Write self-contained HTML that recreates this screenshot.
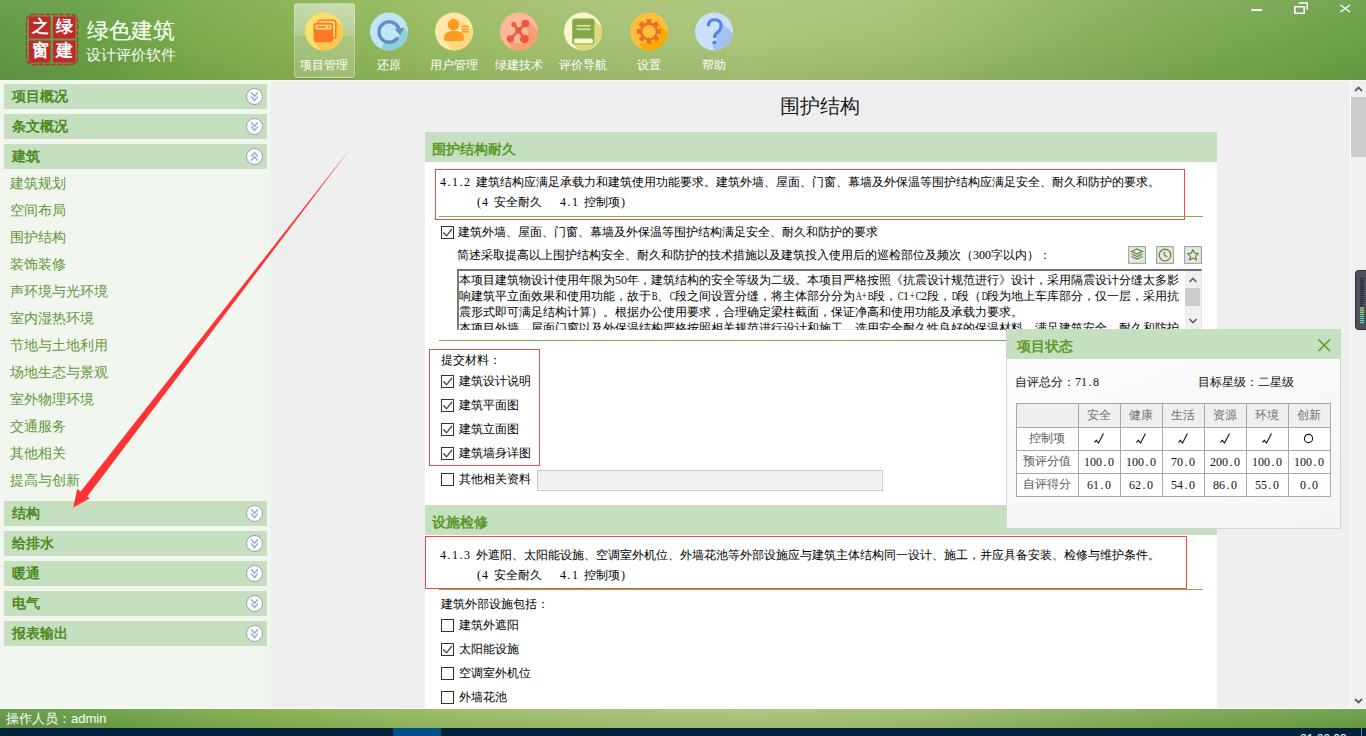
<!DOCTYPE html><html><head><meta charset="utf-8"><style>
*{margin:0;padding:0}
html,body{width:1366px;height:736px;overflow:hidden;background:#efefef;position:relative}
body{font-family:"Liberation Sans",sans-serif}
.a{position:absolute}
#hdr{position:absolute;left:0;top:0;width:1366px;height:80px;
 background:
 linear-gradient(180deg,rgba(255,255,255,0.06) 0%,rgba(0,0,0,0) 50%,rgba(40,80,20,0.10) 100%),
 linear-gradient(100deg,#629848 0%,#68a046 7%,#7dab4c 15%,#8ab252 22%,#9bbc65 33%,#a6c274 44%,#abc57b 55%,#a3c074 66%,#97b869 73%,#8ab05e 80%,#7ca952 88%,#72a34b 95%,#6a9e46 100%);}
.seal{color:#fff;font:bold 17px/22px "Liberation Sans",sans-serif;text-align:center}
.ttl{color:#eef9e6;font:22px/28px "Liberation Sans",sans-serif;letter-spacing:0px;text-shadow:0 0 0.6px #eef9e6}
.sub{color:#f4f9f0;font:15px/20px "Liberation Serif",serif;letter-spacing:0px}
.selbtn{border-radius:3px;border:1px solid rgba(255,255,255,0.30);box-sizing:border-box;
 background:linear-gradient(180deg,rgba(255,255,255,0.50) 0%,rgba(255,255,255,0.36) 43%,rgba(255,255,255,0.24) 44%,rgba(255,255,255,0.20) 100%);
 box-shadow:0 1px 1px rgba(0,0,0,0.15)}
.tbl{color:#fff;font:12px/16px "Liberation Sans",sans-serif;text-align:center}
.acc{background:#c6dfc0}
.acc span{position:absolute;left:8px;top:4px;font:bold 14px/17px "Liberation Sans",sans-serif;color:#4c8a1e}
.itm{font:14px/18px "Liberation Sans",sans-serif;color:#62973b;white-space:nowrap}
.ptitle{font:20px/26px "Liberation Serif",serif;color:#1a1a1a;text-align:center}
.sec{padding-top:1.5px;box-sizing:border-box;background:#c6dfc0;font:bold 14px/30px "Liberation Sans",sans-serif;color:#5b9a2b;text-indent:7px}
.pop{text-indent:11px}
.rbox{border:1.5px solid #f44;box-sizing:border-box}
.gl{background:#7fae57}
.ss{font:12px/16px "Liberation Serif",serif;color:#000;white-space:nowrap}
.h{font-family:"Liberation Mono",monospace;letter-spacing:-1.2px}
.c{display:inline-block;width:6px;text-align:center;font-style:normal;font-family:"Liberation Serif",serif}
.l{transform:scaleX(0.72)}
.ta{border-top:2px solid #6f6f6f;border-left:2px solid #7a7a7a;border-bottom:1px solid #e4e4e4;border-right:1px solid #e4e4e4;box-sizing:border-box;background:#fff}
.tal{font:12px/16px "Liberation Serif",serif;color:#000;white-space:nowrap;height:16px}
.yh12{font:12px/16px "Liberation Sans",sans-serif;color:#111;white-space:nowrap}
.th{font:12px/18px "Liberation Sans",sans-serif;color:#707070;text-align:center}
.td0{color:#5a5a5a}
.tv{font:12px/18px "Liberation Serif",serif;color:#111;text-align:center}
.stbar{background:linear-gradient(180deg,rgba(255,255,255,0.05),rgba(30,60,10,0.08)),linear-gradient(100deg,#629848 0%,#68a046 7%,#7dab4c 15%,#8ab252 22%,#9bbc65 33%,#a6c274 44%,#abc57b 55%,#a3c074 66%,#97b869 73%,#8ab05e 80%,#7ca952 88%,#72a34b 95%,#6a9e46 100%)}
.stat{color:#fff;font:13px/18px "Liberation Sans",sans-serif;white-space:nowrap}
</style></head><body><div id="hdr"></div>
<svg class="a" style="left:24px;top:12px" width="56" height="56" viewBox="0 0 56 56">
<rect x="2.5" y="2.5" width="51" height="50" rx="6" fill="none" stroke="#b8302a" stroke-width="1.3" stroke-dasharray="5 1.5"/>
<rect x="5" y="4.5" width="21.5" height="22" fill="#c0282a"/>
<rect x="29" y="4.5" width="22.5" height="22" fill="#c0282a"/>
<rect x="5" y="28.5" width="21.5" height="22" fill="#c0282a"/>
<rect x="29" y="28.5" width="22.5" height="22" fill="#c0282a"/>
</svg>
<div class="a seal" style="left:29px;top:16px;width:22px;height:22px;">之</div>
<div class="a seal" style="left:53px;top:16px;width:22px;height:22px;">绿</div>
<div class="a seal" style="left:29px;top:40px;width:22px;height:22px;">窗</div>
<div class="a seal" style="left:53px;top:40px;width:22px;height:22px;">建</div>
<div class="a ttl" style="left:87px;top:16.5px;width:100px;height:28px;">绿色建筑</div>
<div class="a sub" style="left:86px;top:45px;width:100px;height:20px;">设计评价软件</div>
<div class="a selbtn" style="left:294px;top:3px;width:61px;height:75px;"></div>
<div class="a tbl" style="left:284px;top:57px;width:80px;height:16px;">项目管理</div>
<div class="a tbl" style="left:349px;top:57px;width:80px;height:16px;">还原</div>
<div class="a tbl" style="left:414px;top:57px;width:80px;height:16px;">用户管理</div>
<div class="a tbl" style="left:479px;top:57px;width:80px;height:16px;">绿建技术</div>
<div class="a tbl" style="left:543px;top:57px;width:80px;height:16px;">评价导航</div>
<div class="a tbl" style="left:609px;top:57px;width:80px;height:16px;">设置</div>
<div class="a tbl" style="left:674px;top:57px;width:80px;height:16px;">帮助</div>
<svg class="a" style="left:0;top:0" width="760" height="60">
<defs>
<clipPath id="c1"><circle cx="324" cy="31.5" r="19"/></clipPath>
<clipPath id="c2"><circle cx="389" cy="31.5" r="19"/></clipPath>
<clipPath id="c3"><circle cx="519" cy="31.5" r="19"/></clipPath>
<clipPath id="c4"><circle cx="583" cy="31.5" r="19"/></clipPath>
<clipPath id="c5"><circle cx="649" cy="31.5" r="19"/></clipPath>
<clipPath id="c6"><circle cx="714" cy="31.5" r="19"/></clipPath>
<clipPath id="c7"><circle cx="454" cy="31.5" r="19"/></clipPath>
</defs>
<!-- 1 project -->
<circle cx="324" cy="31.5" r="19" fill="#fddf6e"/>
<path clip-path="url(#c1)" d="M336 20 L366 50 L346 76 L313.6 42.2 L333 42.2 Z" fill="#fcc84c"/>
<rect x="318" y="20.2" width="17.8" height="17.8" rx="2.2" fill="#fee27c" stroke="#ff7a26" stroke-width="1.6"/>
<rect x="313.6" y="22.8" width="19.6" height="19.4" rx="2.6" fill="#ff7a26"/>
<rect x="315.4" y="24.7" width="16" height="4.7" rx="0.8" fill="#fde07a"/>
<rect x="317.3" y="26.1" width="8" height="1.8" fill="#ff7a26"/>
<rect x="328.2" y="26.1" width="1.9" height="1.8" fill="#ff7a26"/>
<!-- 2 restore -->
<circle cx="389" cy="31.5" r="19" fill="#bee7f6"/>
<path clip-path="url(#c2)" d="M400 34 L404.1 28.3 L432 56 L408 82 L380 52 L384 42.5 L392 41.5 L397 39 Z" fill="#8dd0de"/>
<path d="M397 38.6 A10.2 10.2 0 1 1 398.4 27.6" fill="none" stroke="#6a8dbf" stroke-width="3.4" stroke-linecap="round"/>
<path d="M395.2 29.2 L404.2 28.2 L400 34.4 Z" fill="#6a8dbf" stroke="#6a8dbf" stroke-width="0.8" stroke-linejoin="round"/>
<!-- 7 user -->
<circle cx="454" cy="31.5" r="19" fill="#fee7a8"/>
<path clip-path="url(#c7)" d="M459 20 L469 26 L495 52 L470 78 L446 41 L464 41 Z" fill="#fdd97e"/>
<circle cx="453.5" cy="24.6" r="5.9" fill="#ff9a20"/>
<path d="M444 38.5 Q444 30.8 454 30.8 Q464 30.8 464 38.5 Q464 41 461.5 41 L446.5 41 Q444 41 444 38.5 Z" fill="#ff9a20"/>
<rect x="461.6" y="25.6" width="7.2" height="1.6" fill="#ff9a20"/>
<rect x="461.6" y="28.4" width="7.2" height="1.6" fill="#ff9a20"/>
<rect x="461.6" y="31" width="7.2" height="1.6" fill="#ff9a20"/>
<!-- 3 tech -->
<circle cx="519" cy="31.5" r="19" fill="#fdb899"/>
<path clip-path="url(#c3)" d="M527 20 L550 43 L528 76 L508 42 L524 43.5 L528 40 Z" fill="#f9a073"/>
<path d="M513.8 24.6 L518.5 30.5 L525.4 23.6 M518.5 30.5 L510.4 38.9 M518.5 30.5 L524.4 38.9" fill="none" stroke="#e85a40" stroke-width="2.4"/>
<circle cx="513.8" cy="24.6" r="2.5" fill="#e85a40"/>
<circle cx="525.4" cy="23.6" r="3.9" fill="#e85a40"/>
<circle cx="510.4" cy="38.9" r="3.6" fill="#e85a40"/>
<circle cx="524.4" cy="38.9" r="4.4" fill="#e85a40"/>
<rect x="515.4" y="27.4" width="6.2" height="6.2" fill="#e85a40"/>
<!-- 4 book -->
<circle cx="583" cy="31.5" r="19" fill="#f8f6cb"/>
<path clip-path="url(#c4)" d="M594 20 L622 48 L598 78 L574 44.6 L594.4 44.6 Z" fill="#dcd97c"/>
<rect x="572.2" y="18.6" width="22.2" height="26" rx="2.5" fill="#85a84a"/>
<rect x="573.8" y="38.6" width="19.3" height="5" rx="2.2" fill="#f8f6cb"/>
<rect x="576.6" y="25" width="14" height="1.6" fill="#d9e6a8"/>
<rect x="576.6" y="28.5" width="14" height="1.6" fill="#d9e6a8"/>
<!-- 5 gear -->
<circle cx="649" cy="31.5" r="19" fill="#ffbf3c"/>
<path clip-path="url(#c5)" d="M658 23 L685 50 L660 76 L639 43 L648 44 L657 40 L660 33 Z" fill="#f8aa00"/>
<g fill="#ef6f22">
<circle cx="649" cy="31.5" r="9.2"/>
<rect x="646.6" y="19.2" width="4.8" height="24.6"/>
<rect x="636.7" y="29.1" width="24.6" height="4.8"/>
<rect x="646.6" y="19.2" width="4.8" height="24.6" transform="rotate(45 649 31.5)"/>
<rect x="646.6" y="19.2" width="4.8" height="24.6" transform="rotate(-45 649 31.5)"/>
</g>
<circle cx="649" cy="31.5" r="6.6" fill="#ffbf3c"/>
<!-- 6 help -->
<circle cx="714" cy="31.5" r="19" fill="#cde0fa"/>
<path clip-path="url(#c6)" d="M721.6 22.7 L745 45 L725 80 L712 43.6 L716.3 43.6 L717 34 L721 29 Z" fill="#a2c2f0"/>
<path d="M708.3 26.2 Q708.3 19.8 714.6 19.8 Q721 19.8 721 26 Q721 29.6 717.8 32 Q714.5 34.5 714.5 38" fill="none" stroke="#5682f0" stroke-width="3.1"/>
<rect x="712.6" y="40.8" width="3.8" height="3.3" rx="0.6" fill="#5682f0"/>
</svg>
<svg class="a" style="left:1240px;top:0" width="126" height="30">
<rect x="11.5" y="9" width="10.5" height="2" fill="#fff"/>
<path d="M54.8 6.8 H64.2 V13.2 H54.8 Z" fill="none" stroke="#fff" stroke-width="1.6"/>
<path d="M58.6 3 H67.2 V9.6" fill="none" stroke="#fff" stroke-width="1.6"/>
<path d="M100.5 5 L110 12 M110 5 L100.5 12" stroke="#fff" stroke-width="1.5"/>
</svg>
<div class="a " style="left:0px;top:80px;width:1366px;height:1px;background:#f7faf5"></div>
<div class="a " style="left:0px;top:81px;width:271px;height:627px;background:#f1f6ef"></div>
<div class="a acc" style="left:4px;top:84px;width:263px;height:25px;"><span>项目概况</span></div>
<svg class="a" style="left:245px;top:87px" width="19" height="19" viewBox="-9.5 -9.5 19 19"><circle r="8" fill="#fff" stroke="#9a9a9a" stroke-width="1"/><path d="M-3.4 -4.3 L0 -0.2 L3.4 -4.3 M-3.4 -0.1 L0 4.0 L3.4 -0.1" fill="none" stroke="#90b0d8" stroke-width="1.45"/></svg>
<div class="a acc" style="left:4px;top:114px;width:263px;height:25px;"><span>条文概况</span></div>
<svg class="a" style="left:245px;top:117px" width="19" height="19" viewBox="-9.5 -9.5 19 19"><circle r="8" fill="#fff" stroke="#9a9a9a" stroke-width="1"/><path d="M-3.4 -4.3 L0 -0.2 L3.4 -4.3 M-3.4 -0.1 L0 4.0 L3.4 -0.1" fill="none" stroke="#90b0d8" stroke-width="1.45"/></svg>
<div class="a acc" style="left:4px;top:144px;width:263px;height:25px;"><span>建筑</span></div>
<svg class="a" style="left:245px;top:147px" width="19" height="19" viewBox="-9.5 -9.5 19 19"><circle r="8" fill="#fff" stroke="#9a9a9a" stroke-width="1"/><path d="M-3.4 0.2 L0 -3.9 L3.4 0.2 M-3.4 4.3 L0 0.2 L3.4 4.3" fill="none" stroke="#90b0d8" stroke-width="1.45"/></svg>
<div class="a itm" style="left:10px;top:174px;width:240px;height:18px;">建筑规划</div>
<div class="a itm" style="left:10px;top:201px;width:240px;height:18px;">空间布局</div>
<div class="a itm" style="left:10px;top:228px;width:240px;height:18px;">围护结构</div>
<div class="a itm" style="left:10px;top:255px;width:240px;height:18px;">装饰装修</div>
<div class="a itm" style="left:10px;top:282px;width:240px;height:18px;">声环境与光环境</div>
<div class="a itm" style="left:10px;top:309px;width:240px;height:18px;">室内湿热环境</div>
<div class="a itm" style="left:10px;top:336px;width:240px;height:18px;">节地与土地利用</div>
<div class="a itm" style="left:10px;top:363px;width:240px;height:18px;">场地生态与景观</div>
<div class="a itm" style="left:10px;top:390px;width:240px;height:18px;">室外物理环境</div>
<div class="a itm" style="left:10px;top:417px;width:240px;height:18px;">交通服务</div>
<div class="a itm" style="left:10px;top:444px;width:240px;height:18px;">其他相关</div>
<div class="a itm" style="left:10px;top:471px;width:240px;height:18px;">提高与创新</div>
<div class="a acc" style="left:4px;top:501px;width:263px;height:25px;"><span>结构</span></div>
<svg class="a" style="left:245px;top:504px" width="19" height="19" viewBox="-9.5 -9.5 19 19"><circle r="8" fill="#fff" stroke="#9a9a9a" stroke-width="1"/><path d="M-3.4 -4.3 L0 -0.2 L3.4 -4.3 M-3.4 -0.1 L0 4.0 L3.4 -0.1" fill="none" stroke="#90b0d8" stroke-width="1.45"/></svg>
<div class="a acc" style="left:4px;top:531px;width:263px;height:25px;"><span>给排水</span></div>
<svg class="a" style="left:245px;top:534px" width="19" height="19" viewBox="-9.5 -9.5 19 19"><circle r="8" fill="#fff" stroke="#9a9a9a" stroke-width="1"/><path d="M-3.4 -4.3 L0 -0.2 L3.4 -4.3 M-3.4 -0.1 L0 4.0 L3.4 -0.1" fill="none" stroke="#90b0d8" stroke-width="1.45"/></svg>
<div class="a acc" style="left:4px;top:561px;width:263px;height:25px;"><span>暖通</span></div>
<svg class="a" style="left:245px;top:564px" width="19" height="19" viewBox="-9.5 -9.5 19 19"><circle r="8" fill="#fff" stroke="#9a9a9a" stroke-width="1"/><path d="M-3.4 -4.3 L0 -0.2 L3.4 -4.3 M-3.4 -0.1 L0 4.0 L3.4 -0.1" fill="none" stroke="#90b0d8" stroke-width="1.45"/></svg>
<div class="a acc" style="left:4px;top:591px;width:263px;height:25px;"><span>电气</span></div>
<svg class="a" style="left:245px;top:594px" width="19" height="19" viewBox="-9.5 -9.5 19 19"><circle r="8" fill="#fff" stroke="#9a9a9a" stroke-width="1"/><path d="M-3.4 -4.3 L0 -0.2 L3.4 -4.3 M-3.4 -0.1 L0 4.0 L3.4 -0.1" fill="none" stroke="#90b0d8" stroke-width="1.45"/></svg>
<div class="a acc" style="left:4px;top:621px;width:263px;height:25px;"><span>报表输出</span></div>
<svg class="a" style="left:245px;top:624px" width="19" height="19" viewBox="-9.5 -9.5 19 19"><circle r="8" fill="#fff" stroke="#9a9a9a" stroke-width="1"/><path d="M-3.4 -4.3 L0 -0.2 L3.4 -4.3 M-3.4 -0.1 L0 4.0 L3.4 -0.1" fill="none" stroke="#90b0d8" stroke-width="1.45"/></svg>
<div class="a " style="left:271px;top:81px;width:1079px;height:627px;background:#efefef"></div>
<div class="a ptitle" style="left:700px;top:93px;width:240px;height:26px;">围护结构</div>
<div class="a " style="left:425px;top:132px;width:792px;height:576px;background:#fff"></div>
<div class="a sec" style="left:425px;top:132px;width:792px;height:30px;">围护结构耐久</div>
<div class="a rbox" style="left:435px;top:169px;width:750px;height:51px;"></div>
<div class="a ss" style="left:440px;top:174px;width:740px;height:16px;"><i class="c">4</i><i class="c">.</i><i class="c">1</i><i class="c">.</i><i class="c">2</i><i class="c">&nbsp;</i>建筑结构应满足承载力和建筑使用功能要求。建筑外墙、屋面、门窗、幕墙及外保温等围护结构应满足安全、耐久和防护的要求。</div>
<div class="a ss" style="left:476px;top:194px;width:400px;height:16px;"><i class="c">(</i><i class="c">4</i><i class="c">&nbsp;</i>安全耐久<i class="c">&nbsp;</i><i class="c">&nbsp;</i><i class="c">&nbsp;</i><i class="c">4</i><i class="c">.</i><i class="c">1</i><i class="c">&nbsp;</i>控制项<i class="c">)</i></div>
<div class="a gl" style="left:439px;top:216px;width:764px;height:1px;"></div>
<svg class="a" style="left:441px;top:226px" width="13" height="13"><rect x="0.5" y="0.5" width="12" height="12" fill="#fff" stroke="#333" stroke-width="1"/><path d="M2.2 6.4 L5.6 9.8 L10.9 3" fill="none" stroke="#4a4a4a" stroke-width="1.35"/></svg>
<div class="a ss" style="left:458px;top:224px;width:700px;height:16px;">建筑外墙、屋面、门窗、幕墙及外保温等围护结构满足安全、耐久和防护的要求</div>
<div class="a ss" style="left:457px;top:247px;width:700px;height:16px;">简述采取提高以上围护结构安全、耐久和防护的技术措施以及建筑投入使用后的巡检部位及频次（<i class="c">3</i><i class="c">0</i><i class="c">0</i>字以内）：</div>
<svg class="a" style="left:1128px;top:246px" width="75" height="18">
<g fill="#e6e6e6" stroke="#a8a8a8" stroke-width="1.2"><rect x="0.6" y="0.6" width="16.8" height="16.8"/><rect x="28.6" y="0.6" width="16.8" height="16.8"/><rect x="56.6" y="0.6" width="16.8" height="16.8"/></g>
<g fill="none" stroke="#5b902b" stroke-width="1.25">
<path d="M3.5 5.5 L9 3 L14.5 5.5 L9 8 Z"/>
<path d="M3.5 8 L9 10.5 L14.5 8"/>
<path d="M3.5 10.5 L9 13 L14.5 10.5"/>
<circle cx="37" cy="9" r="5.8"/>
<path d="M36 5.5 L36.5 9 L39 11"/>
<path d="M65 3.6 L66.7 7.2 L70.5 7.6 L67.6 10.1 L68.5 13.9 L65 12 L61.5 13.9 L62.4 10.1 L59.5 7.6 L63.3 7.2 Z" stroke-linejoin="round"/>
</g></svg>
<div class="a ta" style="left:457px;top:269px;width:745px;height:61px;"></div>
<div class="a " style="left:459px;top:272px;width:726px;height:58px;overflow:hidden"><div class="tal">本项目建筑物设计使用年限为<i class="c">5</i><i class="c">0</i>年，建筑结构的安全等级为二级。本项目严格按照《抗震设计规范进行》设计，采用隔震设计分缝太多影</div><div class="tal">响建筑平立面效果和使用功能，故于<i class="c l">B</i>、<i class="c l">C</i>段之间设置分缝，将主体部分分为<i class="c l">A</i><i class="c l">+</i><i class="c l">B</i>段，<i class="c l">C</i><i class="c">1</i><i class="c l">+</i><i class="c l">C</i><i class="c">2</i>段，<i class="c l">D</i>段（<i class="c l">D</i>段为地上车库部分，仅一层，采用抗</div><div class="tal">震形式即可满足结构计算）。根据办公使用要求，合理确定梁柱截面，保证净高和使用功能及承载力要求。</div><div class="tal">本项目外墙、屋面门窗以及外保温结构严格按照相关规范进行设计和施工，选用安全耐久性良好的保温材料，满足建筑安全，耐久和防护</div></div>
<div class="a " style="left:1185px;top:271px;width:16px;height:59px;background:#f0f0f0"></div>
<div class="a " style="left:1185px;top:288px;width:15px;height:18px;background:#cdcdcd"></div>
<svg class="a" style="left:1185px;top:271px" width="16" height="59"><path d="M4.5 11 L8 7.5 L11.5 11" fill="none" stroke="#606060" stroke-width="1.6"/><path d="M4.5 48 L8 51.5 L11.5 48" fill="none" stroke="#606060" stroke-width="1.6"/></svg>
<div class="a gl" style="left:439px;top:340px;width:764px;height:1px;"></div>
<div class="a rbox" style="left:429px;top:349px;width:111px;height:117px;"></div>
<div class="a ss" style="left:441px;top:352px;width:100px;height:16px;">提交材料：</div>
<svg class="a" style="left:441px;top:375px" width="13" height="13"><rect x="0.5" y="0.5" width="12" height="12" fill="#fff" stroke="#333" stroke-width="1"/><path d="M2.2 6.4 L5.6 9.8 L10.9 3" fill="none" stroke="#4a4a4a" stroke-width="1.35"/></svg>
<div class="a ss" style="left:459px;top:373px;width:100px;height:16px;">建筑设计说明</div>
<svg class="a" style="left:441px;top:399px" width="13" height="13"><rect x="0.5" y="0.5" width="12" height="12" fill="#fff" stroke="#333" stroke-width="1"/><path d="M2.2 6.4 L5.6 9.8 L10.9 3" fill="none" stroke="#4a4a4a" stroke-width="1.35"/></svg>
<div class="a ss" style="left:459px;top:397px;width:100px;height:16px;">建筑平面图</div>
<svg class="a" style="left:441px;top:423px" width="13" height="13"><rect x="0.5" y="0.5" width="12" height="12" fill="#fff" stroke="#333" stroke-width="1"/><path d="M2.2 6.4 L5.6 9.8 L10.9 3" fill="none" stroke="#4a4a4a" stroke-width="1.35"/></svg>
<div class="a ss" style="left:459px;top:421px;width:100px;height:16px;">建筑立面图</div>
<svg class="a" style="left:441px;top:447px" width="13" height="13"><rect x="0.5" y="0.5" width="12" height="12" fill="#fff" stroke="#333" stroke-width="1"/><path d="M2.2 6.4 L5.6 9.8 L10.9 3" fill="none" stroke="#4a4a4a" stroke-width="1.35"/></svg>
<div class="a ss" style="left:459px;top:445px;width:100px;height:16px;">建筑墙身详图</div>
<svg class="a" style="left:441px;top:473px" width="13" height="13"><rect x="0.5" y="0.5" width="12" height="12" fill="#fff" stroke="#333" stroke-width="1"/></svg>
<div class="a ss" style="left:459px;top:471px;width:100px;height:16px;">其他相关资料</div>
<div class="a " style="left:537px;top:470px;width:346px;height:21px;background:#f0f0f0;border:1px solid #c8c8c8;box-shadow:inset -1px -1px 0 #fff;box-sizing:border-box"></div>
<div class="a sec" style="left:425px;top:505px;width:792px;height:30px;">设施检修</div>
<div class="a rbox" style="left:425px;top:536px;width:762px;height:53px;"></div>
<div class="a ss" style="left:440px;top:547px;width:740px;height:16px;"><i class="c">4</i><i class="c">.</i><i class="c">1</i><i class="c">.</i><i class="c">3</i><i class="c">&nbsp;</i>外遮阳、太阳能设施、空调室外机位、外墙花池等外部设施应与建筑主体结构同一设计、施工，并应具备安装、检修与维护条件。</div>
<div class="a ss" style="left:476px;top:567px;width:400px;height:16px;"><i class="c">(</i><i class="c">4</i><i class="c">&nbsp;</i>安全耐久<i class="c">&nbsp;</i><i class="c">&nbsp;</i><i class="c">&nbsp;</i><i class="c">4</i><i class="c">.</i><i class="c">1</i><i class="c">&nbsp;</i>控制项<i class="c">)</i></div>
<div class="a gl" style="left:439px;top:589px;width:764px;height:1px;"></div>
<div class="a ss" style="left:441px;top:596px;width:200px;height:16px;">建筑外部设施包括：</div>
<svg class="a" style="left:441px;top:619px" width="13" height="13"><rect x="0.5" y="0.5" width="12" height="12" fill="#fff" stroke="#333" stroke-width="1"/></svg>
<div class="a ss" style="left:459px;top:617px;width:120px;height:16px;">建筑外遮阳</div>
<svg class="a" style="left:441px;top:643px" width="13" height="13"><rect x="0.5" y="0.5" width="12" height="12" fill="#fff" stroke="#333" stroke-width="1"/><path d="M2.2 6.4 L5.6 9.8 L10.9 3" fill="none" stroke="#4a4a4a" stroke-width="1.35"/></svg>
<div class="a ss" style="left:459px;top:641px;width:120px;height:16px;">太阳能设施</div>
<svg class="a" style="left:441px;top:667px" width="13" height="13"><rect x="0.5" y="0.5" width="12" height="12" fill="#fff" stroke="#333" stroke-width="1"/></svg>
<div class="a ss" style="left:459px;top:665px;width:120px;height:16px;">空调室外机位</div>
<svg class="a" style="left:441px;top:691px" width="13" height="13"><rect x="0.5" y="0.5" width="12" height="12" fill="#fff" stroke="#333" stroke-width="1"/></svg>
<div class="a ss" style="left:459px;top:689px;width:120px;height:16px;">外墙花池</div>
<div class="a " style="left:1350px;top:81px;width:1px;height:627px;background:#fff"></div>
<div class="a " style="left:1351px;top:81px;width:15px;height:627px;background:#f0f0f0"></div>
<div class="a " style="left:1351px;top:97px;width:15px;height:60px;background:#cdcdcd"></div>
<svg class="a" style="left:1351px;top:81px" width="15" height="627"><path d="M4 10 L7.5 6.5 L11 10" fill="none" stroke="#606060" stroke-width="1.8"/><path d="M4 618 L7.5 621.5 L11 618" fill="none" stroke="#606060" stroke-width="1.8"/></svg>
<svg class="a" style="left:1355px;top:270px" width="11" height="60">
<rect x="0.5" y="0.5" width="14" height="59" rx="3" fill="#4d525c" stroke="#2e3138" stroke-width="1"/>
<rect x="5" y="8.0" width="4" height="1.2" fill="#2a2d33"/><rect x="5" y="10.1" width="4" height="1.2" fill="#2a2d33"/><rect x="5" y="12.2" width="4" height="1.2" fill="#2a2d33"/><rect x="5" y="14.3" width="4" height="1.2" fill="#2a2d33"/><rect x="5" y="16.4" width="4" height="1.2" fill="#2a2d33"/><rect x="5" y="18.5" width="4" height="1.2" fill="#2a2d33"/><rect x="5" y="20.6" width="4" height="1.2" fill="#2a2d33"/><rect x="5" y="22.700000000000003" width="4" height="1.2" fill="#2a2d33"/><rect x="5" y="24.8" width="4" height="1.2" fill="#2a2d33"/><rect x="5" y="26.900000000000002" width="4" height="1.2" fill="#2a2d33"/><rect x="5" y="29.0" width="4" height="1.2" fill="#2a2d33"/><rect x="5" y="31.1" width="4" height="1.2" fill="#2a2d33"/><rect x="5" y="33.2" width="4" height="1.2" fill="#2a2d33"/><rect x="5" y="35.3" width="4" height="1.2" fill="#2a2d33"/><rect x="5" y="37.400000000000006" width="4" height="1.2" fill="#a6e07a"/><rect x="5" y="39.5" width="4" height="1.2" fill="#a6e07a"/><rect x="5" y="41.6" width="4" height="1.2" fill="#a6e07a"/><rect x="5" y="43.7" width="4" height="1.2" fill="#5fd6b0"/><rect x="5" y="45.800000000000004" width="4" height="1.2" fill="#5fd6b0"/><rect x="5" y="47.9" width="4" height="1.2" fill="#5fd6b0"/><rect x="5" y="50.0" width="4" height="1.2" fill="#5fd6b0"/><rect x="5" y="52.1" width="4" height="1.2" fill="#5fd6b0"/></svg>
<div class="a " style="left:1006px;top:329px;width:335px;height:200px;background:linear-gradient(160deg,#fdfdfd,#f5f5f5);border:1px solid #d4d4d4;box-sizing:border-box"></div>
<div class="a sec pop" style="left:1006px;top:329px;width:335px;height:30px;">项目状态</div>
<svg class="a" style="left:1316px;top:337px" width="16" height="16"><path d="M2.5 2.5 L14 14 M14 2.5 L2.5 14" stroke="#5a9a2a" stroke-width="1.5"/></svg>
<div class="a yh12" style="left:1015px;top:373.5px;width:150px;height:16px;">自评总分：<i class="c">7</i><i class="c">1</i><i class="c">.</i><i class="c">8</i></div>
<div class="a yh12" style="left:1198px;top:373.5px;width:150px;height:16px;">目标星级：二星级</div>
<div class="a " style="left:1017px;top:404px;width:313px;height:23px;background:#efefef"></div><div class="a " style="left:1017px;top:428px;width:313px;height:68px;background:#fff"></div><div class="a " style="left:1016px;top:403px;width:315px;height:1px;background:#a9a9a9"></div><div class="a " style="left:1016px;top:427px;width:315px;height:1px;background:#a9a9a9"></div><div class="a " style="left:1016px;top:450px;width:315px;height:1px;background:#a9a9a9"></div><div class="a " style="left:1016px;top:473px;width:315px;height:1px;background:#a9a9a9"></div><div class="a " style="left:1016px;top:496px;width:315px;height:1px;background:#a9a9a9"></div><div class="a " style="left:1016px;top:403px;width:1px;height:94px;background:#a9a9a9"></div><div class="a " style="left:1078px;top:403px;width:1px;height:94px;background:#a9a9a9"></div><div class="a " style="left:1120px;top:403px;width:1px;height:94px;background:#a9a9a9"></div><div class="a " style="left:1162px;top:403px;width:1px;height:94px;background:#a9a9a9"></div><div class="a " style="left:1204px;top:403px;width:1px;height:94px;background:#a9a9a9"></div><div class="a " style="left:1246px;top:403px;width:1px;height:94px;background:#a9a9a9"></div><div class="a " style="left:1288px;top:403px;width:1px;height:94px;background:#a9a9a9"></div><div class="a " style="left:1330px;top:403px;width:1px;height:94px;background:#a9a9a9"></div>
<div class="a th" style="left:1078px;top:406px;width:42px;height:18px;">安全</div>
<div class="a th" style="left:1120px;top:406px;width:42px;height:18px;">健康</div>
<div class="a th" style="left:1162px;top:406px;width:42px;height:18px;">生活</div>
<div class="a th" style="left:1204px;top:406px;width:42px;height:18px;">资源</div>
<div class="a th" style="left:1246px;top:406px;width:42px;height:18px;">环境</div>
<div class="a th" style="left:1288px;top:406px;width:42px;height:18px;">创新</div>
<div class="a th td0" style="left:1016px;top:429px;width:62px;height:18px;">控制项</div>
<div class="a th td0" style="left:1016px;top:452px;width:62px;height:18px;">预评分值</div>
<div class="a th td0" style="left:1016px;top:475px;width:62px;height:18px;">自评得分</div>
<svg class="a" style="left:1016px;top:428px" width="315" height="22"><path d="M78.4 14.4 L80.4 12.4 L82.5 15.1 L87.5 5.4" fill="none" stroke="#111" stroke-width="1.1"/><path d="M120.4 14.4 L122.4 12.4 L124.5 15.1 L129.5 5.4" fill="none" stroke="#111" stroke-width="1.1"/><path d="M162.4 14.4 L164.4 12.4 L166.5 15.1 L171.5 5.4" fill="none" stroke="#111" stroke-width="1.1"/><path d="M204.4 14.4 L206.4 12.4 L208.5 15.1 L213.5 5.4" fill="none" stroke="#111" stroke-width="1.1"/><path d="M246.4 14.4 L248.4 12.4 L250.5 15.1 L255.5 5.4" fill="none" stroke="#111" stroke-width="1.1"/><circle cx="292.5" cy="10.5" r="4.1" fill="none" stroke="#111" stroke-width="1.1"/></svg>
<div class="a tv" style="left:1078px;top:453px;width:42px;height:18px;"><i class="c">1</i><i class="c">0</i><i class="c">0</i><i class="c">.</i><i class="c">0</i></div>
<div class="a tv" style="left:1120px;top:453px;width:42px;height:18px;"><i class="c">1</i><i class="c">0</i><i class="c">0</i><i class="c">.</i><i class="c">0</i></div>
<div class="a tv" style="left:1162px;top:453px;width:42px;height:18px;"><i class="c">7</i><i class="c">0</i><i class="c">.</i><i class="c">0</i></div>
<div class="a tv" style="left:1204px;top:453px;width:42px;height:18px;"><i class="c">2</i><i class="c">0</i><i class="c">0</i><i class="c">.</i><i class="c">0</i></div>
<div class="a tv" style="left:1246px;top:453px;width:42px;height:18px;"><i class="c">1</i><i class="c">0</i><i class="c">0</i><i class="c">.</i><i class="c">0</i></div>
<div class="a tv" style="left:1288px;top:453px;width:42px;height:18px;"><i class="c">1</i><i class="c">0</i><i class="c">0</i><i class="c">.</i><i class="c">0</i></div>
<div class="a tv" style="left:1078px;top:476px;width:42px;height:18px;"><i class="c">6</i><i class="c">1</i><i class="c">.</i><i class="c">0</i></div>
<div class="a tv" style="left:1120px;top:476px;width:42px;height:18px;"><i class="c">6</i><i class="c">2</i><i class="c">.</i><i class="c">0</i></div>
<div class="a tv" style="left:1162px;top:476px;width:42px;height:18px;"><i class="c">5</i><i class="c">4</i><i class="c">.</i><i class="c">0</i></div>
<div class="a tv" style="left:1204px;top:476px;width:42px;height:18px;"><i class="c">8</i><i class="c">6</i><i class="c">.</i><i class="c">0</i></div>
<div class="a tv" style="left:1246px;top:476px;width:42px;height:18px;"><i class="c">5</i><i class="c">5</i><i class="c">.</i><i class="c">0</i></div>
<div class="a tv" style="left:1288px;top:476px;width:42px;height:18px;"><i class="c">0</i><i class="c">.</i><i class="c">0</i></div>
<svg class="a" style="left:0;top:0" width="400" height="520"><polygon points="351.5,147 80.7,491.6 77.25,489.1 73.2,507.6 89.75,498.5 87.25,496.6" fill="#ff3333"/></svg>
<div class="a " style="left:0px;top:708px;width:1366px;height:1px;background:#fbfdf9"></div>
<div class="a stbar" style="left:0px;top:709px;width:1366px;height:19px;"></div>
<div class="a stat" style="left:6px;top:710px;width:200px;height:18px;">操作人员：<span style="font-family:'Liberation Sans',sans-serif">admin</span></div>
<div class="a " style="left:0px;top:728px;width:1366px;height:8px;background:#00203e"></div>
<div class="a " style="left:393px;top:728px;width:48px;height:8px;background:#004f8b"></div>
<div class="a " style="left:1361px;top:728px;width:1px;height:8px;background:#6a7a8a"></div>
<div class="a " style="left:1300px;top:732px;width:60px;height:14px;color:#fff;font:12px/14px 'Liberation Sans',sans-serif">21:26:03</div></body></html>
